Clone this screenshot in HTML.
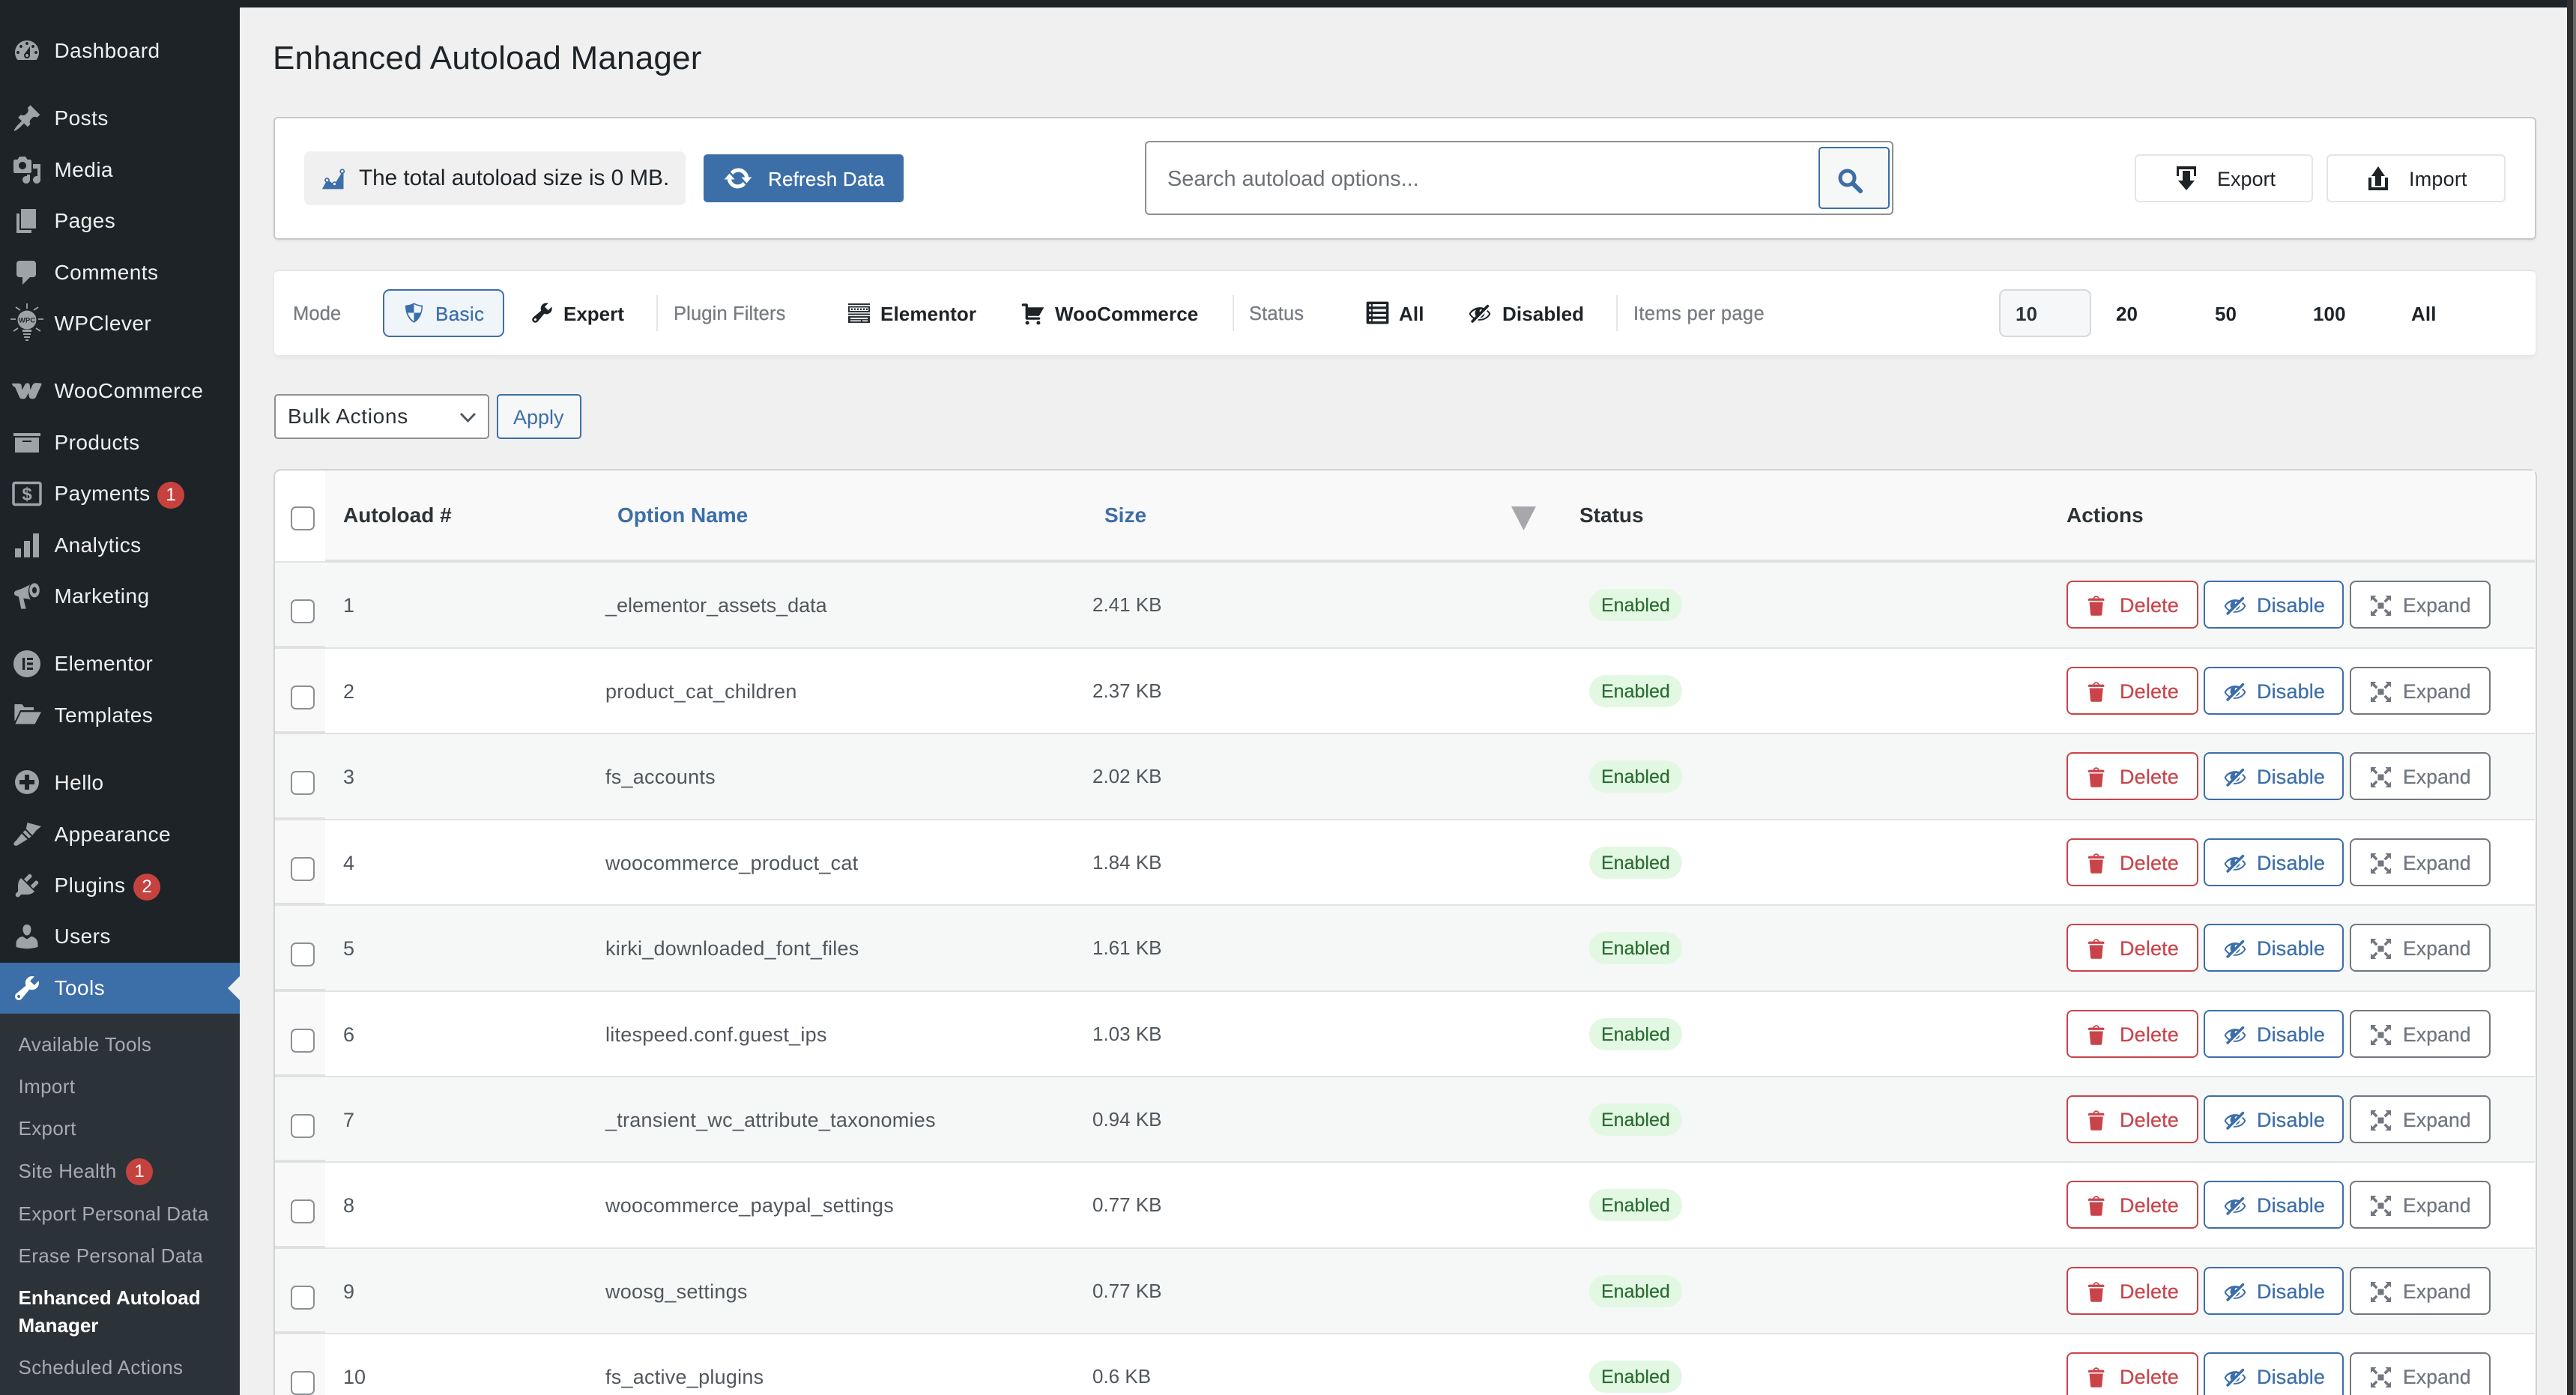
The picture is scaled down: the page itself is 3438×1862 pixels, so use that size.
<!DOCTYPE html>
<html lang="en"><head><meta charset="utf-8"><title>Enhanced Autoload Manager</title>
<style>
html,body{margin:0;padding:0;width:3438px;height:1862px;overflow:hidden;background:#f0f0f0;font-family:"Liberation Sans",sans-serif}
#p{position:relative;width:3438px;height:1862px;overflow:hidden}
.a,.t,svg.i{position:absolute}
.t{white-space:nowrap;line-height:40px;height:40px}
.m{left:72.500px;font-size:28px;letter-spacing:.45px;color:#f0f0f1}
.s{left:24.500px;font-size:26px;letter-spacing:.35px;color:#a7abb0}
svg.i{fill:#9ea3a8}
svg.n{left:16px;width:40px;height:40px}
.bd{background:#c5423f;border-radius:50%;width:36px;height:36px;color:#fff;font-size:24px;line-height:36px;text-align:center}
.f{font-size:26px;font-weight:bold;letter-spacing:.1px;color:#1d2327;top:399px}
.l{font-size:25.500px;letter-spacing:.15px;color:#787c82;top:399px;-webkit-text-stroke:.3px #787c82}
.dv{top:394px;width:2px;height:48px;background:#e6e6e6}
.th{font-size:28px;font-weight:bold;color:#2c3338;top:668px}
.r{position:absolute;left:0;width:0}
.bg{position:absolute;left:367px;width:3016px;box-sizing:border-box;border-bottom:2px solid #e1e3e3}
.cg{position:absolute;left:367px;width:67px;box-sizing:border-box;border-bottom:4px solid #e1e1e1}
.o .bg,.o .cg{background:#f6f7f7}
.e .bg{background:#fff}.e .cg{background:#f9f9f9}
.cb{position:absolute;left:388px;top:49px;width:32px;height:32px;box-sizing:border-box;background:#fff;border:2px solid #8c8f94;border-radius:7px}
.c{font-size:27px;color:#50575e;top:37px}
.r span:nth-of-type(1){margin-left:-1px}
.r span:nth-of-type(2){letter-spacing:.25px}
.r span:nth-of-type(3){font-size:26px;margin-left:-1px;top:36px}
.pl{position:absolute;left:2121px;top:35px;width:124px;height:43px;border-radius:22px;background:#e2f8e3}
.en{left:2137px;top:37px;font-size:25px;color:#2b6a32;-webkit-text-stroke:.2px #2b6a32}
.b{position:absolute;top:24px;height:64px;box-sizing:border-box;border:2px solid;border-radius:8px;background:#fff}
.x{left:2758px;width:176px;border-color:#c9444a}
.y{left:2941px;width:187px;border-color:#3c6ea8}
.z{left:3136px;width:188px;border-color:#72777f}
.bt{font-size:27px;top:37px;letter-spacing:.15px;-webkit-text-stroke:.25px}
.dt{left:2829px;color:#c9444a}.ds{left:3012px;color:#3c6ea8}.xp{left:3207px;color:#6f7680;font-size:26.500px}
.r svg{position:absolute}
.ti{left:2782px;top:41px;width:33px;height:33px;fill:#c9444a}
.hi{left:2967px;top:41px;width:32px;height:32px;fill:#3c6ea8}
.ei{left:3164px;top:44px;width:27px;height:27px;fill:#72777f}
</style></head><body><div id="p">
<svg width="0" height="0" style="position:absolute"><defs>
<symbol id="tr" viewBox="0 0 20 20"><path d="M12 4h3c.6 0 1 .4 1 1v1H3V5c0-.6.5-1 1-1h3c.2-1.100 1.300-2 2.500-2s2.300.9 2.500 2zM8 4h3c-.2-.6-.9-1-1.500-1S8.200 3.400 8 4zM4 7h11l-.9 10.100c0 .5-.5.9-1 .9H5.900c-.5 0-.9-.4-1-.9L4 7z"/></symbol>
<symbol id="hd" viewBox="0 0 20 20"><path d="M17.200 3.300l.16.17c.39.39.39 1.020 0 1.410L4.550 17.700c-.39.39-1.030.39-1.410 0l-.17-.17c-.39-.39-.39-1.020 0-1.410l1.590-1.600c-1.570-1-2.760-2.300-3.560-3.930.81-1.650 2.030-2.980 3.640-3.990S8.040 5.090 10 5.090c1.200 0 2.330.21 3.400.6l2.380-2.390c.39-.39 1.030-.39 1.420 0zm-7.090 4.010c-.23.25-.34.54-.34.88 0 .31.12.58.31.81l1.800-1.790c-.13-.12-.28-.21-.45-.26-.11-.01-.28-.03-.49-.04-.33.03-.6.16-.83.4zM2.400 10.590c.69 1.230 1.710 2.250 3.050 3.050l1.280-1.280c-.51-.69-.77-1.470-.77-2.360 0-1.060.36-1.980 1.090-2.760-1.040.27-1.960.7-2.760 1.260-.8.58-1.430 1.270-1.890 2.090zm13.220-2.130l.96-.96c1.020.86 1.830 1.890 2.420 3.090-.81 1.650-2.030 2.980-3.640 3.990s-3.400 1.510-5.360 1.510c-.63 0-1.240-.07-1.830-.18l1.070-1.070c.25.02.5.05.76.05 1.630 0 3.130-.4 4.500-1.210s2.400-1.840 3.100-3.090c-.46-.82-1.090-1.510-1.890-2.090-.03-.01-.06-.03-.09-.04zm-5.580 5.580l4-4c-.01 1.100-.41 2.040-1.180 2.810-.78.78-1.720 1.180-2.820 1.190z"/></symbol>
<symbol id="ex" viewBox="0 0 27 27"><path d="M9.500 9.500h8v8h-8z"/><path d="M0 0h7.500L5 2.500 9.500 7 7 9.500 2.500 5 0 7.500zM27 0v7.500L24.500 5 20 9.500 17.500 7 22 2.500 19.500 0zM0 27v-7.500L2.500 22 7 17.500 9.500 20 5 24.500 7.500 27zM27 27h-7.500L22 24.500 17.500 20 20 17.500 24.500 22 27 19.500z"/></symbol>
</defs></svg>

<!-- sidebar -->
<div class="a" style="left:0;top:0;width:320px;height:1862px;background:#1d2327"></div>
<div class="a" style="left:320px;top:0;width:3106px;height:10px;background:#1d2327"></div>
<div class="a" style="left:3426px;top:0;width:8px;height:1862px;background:#2d2d2d"></div>
<div class="a" style="left:3434px;top:0;width:4px;height:1862px;background:#6a6a6a"></div>

<svg class="i n" style="top:48px" viewBox="0 0 20 20"><path d="M3.760 16h12.480c1.100-1.370 1.760-3.110 1.760-5 0-4.420-3.580-8-8-8s-8 3.580-8 8c0 1.890.660 3.630 1.760 5zM10 4c.55 0 1 .45 1 1s-.45 1-1 1-1-.45-1-1 .45-1 1-1zM6 6c.55 0 1 .45 1 1s-.45 1-1 1-1-.45-1-1 .45-1 1-1zm8 0c.55 0 1 .45 1 1s-.45 1-1 1-1-.45-1-1 .45-1 1-1zm-5.370 5.550L12 7v6c0 1.100-.9 2-2 2s-2-.9-2-2c0-.57.24-1.080.63-1.450zM4 10c.55 0 1 .45 1 1s-.45 1-1 1-1-.45-1-1 .45-1 1-1zm12 0c.55 0 1 .45 1 1s-.45 1-1 1-1-.45-1-1 .45-1 1-1zm-5 3c0-.55-.45-1-1-1s-1 .45-1 1 .45 1 1 1 1-.45 1-1z"/></svg>
<span class="t m" style="top:48px">Dashboard</span>
<svg class="i n" style="top:138px" viewBox="0 0 20 20"><path d="M10.440 3.020l1.820-1.820 6.360 6.350-1.830 1.820c-1.050-.68-2.480-.57-3.410.36l-.75.75c-.92.930-1.040 2.350-.35 3.410l-1.830 1.820-2.410-2.410-2.800 2.790c-.42.42-3.380 2.710-3.800 2.290s1.860-3.390 2.280-3.810l2.790-2.790L4.100 9.360l1.830-1.820c1.050.69 2.480.57 3.400-.36l.75-.75c.93-.92 1.050-2.350.36-3.410z"/></svg>
<span class="t m" style="top:138px">Posts</span>
<svg class="i n" style="top:207px" viewBox="0 0 20 20"><path d="M13 11V4c0-.55-.45-1-1-1h-1.670L9 1H5L3.670 3H2c-.55 0-1 .45-1 1v7c0 .55.45 1 1 1h10c.55 0 1-.45 1-1zM7 4.500c1.380 0 2.500 1.120 2.500 2.500S8.380 9.500 7 9.500 4.500 8.380 4.500 7 5.620 4.500 7 4.500zM14 6h5v10.500c0 1.380-1.120 2.500-2.500 2.500S14 17.880 14 16.500s1.120-2.500 2.500-2.500c.17 0 .34.02.5.05V9h-3V6zm-4 8.050V13h2v3.500c0 1.380-1.120 2.500-2.500 2.500S7 17.880 7 16.500 8.120 14 9.500 14c.17 0 .34.02.5.05z"/></svg>
<span class="t m" style="top:207px">Media</span>
<svg class="i n" style="top:275px" viewBox="0 0 20 20"><path d="M6 15V2h10v13H6zm-1 1h8v2H3V5h2v11z"/></svg>
<span class="t m" style="top:275px">Pages</span>
<svg class="i n" style="top:344px" viewBox="0 0 20 20"><path d="M5 2h9c1.100 0 2 .9 2 2v7c0 1.100-.9 2-2 2h-2l-5 5v-5H5c-1.100 0-2-.9-2-2V4c0-1.100.9-2 2-2z"/></svg>
<span class="t m" style="top:344px">Comments</span>
<svg class="i" style="left:12px;top:402px;width:48px;height:56px" viewBox="0 0 48 56"><circle cx="24" cy="25" r="12.500"/><text x="24" y="28.500" font-size="9.500" font-weight="bold" text-anchor="middle" fill="#1d2327" font-family="Liberation Sans">WPC</text><path d="M18 38h12v3H18zM19 43h10v2H19zM20 47h8v2H20zM22 51h4v2h-4z"/><path d="M24 3v7M9 8l6 4M39 8l-6 4M2 24h7M39 24h7M6 40l6-4M42 40l-6-4" stroke="#9ea3a8" stroke-width="1.800" fill="none"/></svg>
<span class="t m" style="top:412px">WPClever</span>
<svg class="i" style="left:16px;top:511px;width:40px;height:22px;overflow:visible" viewBox="0 0 40 22"><path stroke="#9ea3a8" stroke-width="1.500" stroke-linejoin="round" d="M.8 1.500h8.200c2 0 3 1 3 3l1 7.500 5-9.500c1-2 5-2 5 1l1 8.500 4-8.500c1-3 4-3 11-2l-7.500 16.500c-1 3.500-7 3.500-8 .5l-1-7.500-4 7.500c-1 3-7 3-8 0L5 6C4 4 1.500 5 .8 1.500z"/></svg>
<span class="t m" style="top:502px">WooCommerce</span>
<svg class="i n" style="top:570px" viewBox="0 0 20 20"><path d="M19 4v2H1V4h18zM2 7h16v10H2V7zm11 3V9H7v1h6z"/></svg>
<span class="t m" style="top:571px">Products</span>
<svg class="i n" style="top:639px" viewBox="0 0 40 40"><rect x="2" y="5.500" width="36" height="29" rx="2" fill="none" stroke="#9ea3a8" stroke-width="3.500"/><text x="20" y="28.500" font-size="24" font-weight="bold" text-anchor="middle" font-family="Liberation Sans">$</text></svg>
<span class="t m" style="top:639px">Payments</span>
<div class="a bd" style="left:210px;top:643px">1</div>
<svg class="i n" style="top:708px" viewBox="0 0 20 20"><path d="M18 18V2h-4v16h4zm-6 0V7H8v11h4zm-6 0v-6H2v6h4z"/></svg>
<span class="t m" style="top:708px">Analytics</span>
<svg class="i n" style="top:776px" viewBox="0 0 20 20"><path fill-rule="evenodd" d="M15 1.200c2 0 3.400 2.100 3.400 4.700s-1.400 4.800-3.400 4.800c-2 0-3.400-2.200-3.400-4.800s1.400-4.700 3.400-4.700zm0 2.600c-.9 0-1.500.9-1.500 2.100S14.100 8 15 8s1.500-.9 1.500-2.100S15.900 3.800 15 3.800z"/><path d="M12 2.100C9 4 5 5.400 2.500 6.300 1.300 6.800 1 8.600 2.300 9.400L4.500 10.300l1.600 8h3.200l-1.700-7c1.700.1 3.400.3 4.800.9C10.600 9 10.500 5 12 2.100z"/></svg>
<span class="t m" style="top:776px">Marketing</span>
<svg class="i n" style="top:866px" viewBox="0 0 20 20"><path fill-rule="evenodd" d="M10 1a9 9 0 100 18 9 9 0 000-18zM7 6h1.600v8H7zm3 0h4v1.500h-4zm0 3.200h4v1.600h-4zm0 3.300h4V14h-4z"/></svg>
<span class="t m" style="top:866px">Elementor</span>
<svg class="i n" style="top:934px" viewBox="0 0 20 20"><path d="M1.700 3h5l1.500 2h6.300v2H5.500L2.400 13.500 1.700 14zM2.200 16.200 6 8.200h13.500l-4.200 8z"/></svg>
<span class="t m" style="top:935px">Templates</span>
<svg class="i n" style="top:1024px" viewBox="0 0 20 20"><path fill-rule="evenodd" d="M10 2a8 8 0 100 16 8 8 0 000-16zM8.500 5h3v3.500H15v3h-3.500V15h-3v-3.500H5v-3h3.500z"/></svg>
<span class="t m" style="top:1025px">Hello</span>
<svg class="i n" style="top:1093px" viewBox="0 0 20 20"><path d="M10.200 2.500 19.500 5l-3.400 2.800-2.500 3.200-4.200-4.300zM8.800 7.500 12.800 11.700 11.300 13 7.300 9zM6.500 9.800 10.300 13.600 4.200 17.400C3 18.300 1.300 18 1.200 16.800c-.1-1 .8-1.600 1.400-2.200z"/></svg>
<span class="t m" style="top:1094px">Appearance</span>
<svg class="i n" style="top:1162px" viewBox="0 0 20 20"><path d="M13.110 4.360L9.870 7.600 8 5.730l3.240-3.240c.35-.34 1.050-.2 1.560.32.52.51.66 1.210.31 1.550zm-8 1.770l.91-1.120 9.010 9.010-1.190.84c-.71.71-2.630 1.160-3.820 1.160H6.140L4.900 17.260c-.59.59-1.540.59-2.120 0-.59-.58-.59-1.530 0-2.120l1.240-1.240v-3.880c0-1.130.4-3.190 1.090-3.890zm7.260 3.970l3.240-3.240c.34-.35 1.040-.21 1.550.31.52.51.66 1.210.31 1.550l-3.240 3.250z"/></svg>
<span class="t m" style="top:1162px">Plugins</span>
<div class="a bd" style="left:178px;top:1166px">2</div>
<svg class="i n" style="top:1230px" viewBox="0 0 20 20"><path d="M10 9.250c-2.270 0-2.730-3.440-2.730-3.440C7 4.020 7.820 2 9.970 2c2.160 0 2.980 2.020 2.710 3.810 0 0-.41 3.440-2.680 3.440zm0 2.570L12.720 10c2.390 0 4.520 2.330 4.520 4.530v2.490s-3.650 1.130-7.240 1.130c-3.650 0-7.240-1.130-7.240-1.130v-2.490c0-2.250 1.940-4.480 4.470-4.480z"/></svg>
<span class="t m" style="top:1230px">Users</span>

<div class="a" style="left:0;top:1285px;width:320px;height:68px;background:#3c6ea8"></div>
<svg class="i n" style="top:1299px;fill:#fff" viewBox="0 0 20 20"><path d="M16.680 9.770c-1.340 1.340-3.300 1.670-4.950.99l-5.410 6.520c-.99.99-2.590.99-3.580 0s-.99-2.590 0-3.570l6.520-5.420c-.68-1.650-.35-3.610.99-4.950 1.280-1.280 3.120-1.620 4.720-1.060l-2.890 2.890 2.820 2.820 2.860-2.870c.53 1.580.18 3.390-1.080 4.650zM3.810 16.210c.4.39 1.040.39 1.430 0 .4-.4.4-1.040 0-1.430-.39-.4-1.030-.4-1.430 0-.39.39-.39 1.030 0 1.430z"/></svg>
<span class="t m" style="top:1299px;color:#fff">Tools</span>
<svg class="i" style="left:304px;top:1303px;width:16px;height:32px;fill:#f0f0f0" viewBox="0 0 16 32"><path d="M16 0v32L0 16z"/></svg>
<div class="a" style="left:0;top:1353px;width:320px;height:509px;background:#2c3338"></div>
<span class="t s" style="top:1374px">Available Tools</span>
<span class="t s" style="top:1430px">Import</span>
<span class="t s" style="top:1486px">Export</span>
<span class="t s" style="top:1543px">Site Health</span>
<div class="a bd" style="left:168px;top:1546px">1</div>
<span class="t s" style="top:1600px">Export Personal Data</span>
<span class="t s" style="top:1656px">Erase Personal Data</span>
<span class="t s" style="top:1712px;color:#fff;font-weight:bold;letter-spacing:0">Enhanced Autoload</span>
<span class="t s" style="top:1749px;color:#fff;font-weight:bold;letter-spacing:0">Manager</span>
<span class="t s" style="top:1805px">Scheduled Actions</span>

<!-- title -->
<span class="t" style="left:364px;top:58px;font-size:44px;letter-spacing:.2px;color:#1d2327">Enhanced Autoload Manager</span>

<!-- card 1 -->
<div class="a" style="left:365px;top:156px;width:3020px;height:164px;box-sizing:border-box;background:#fff;border:2px solid #c8c9cd;border-radius:6px;box-shadow:0 2px 3px rgba(0,0,0,.06)"></div>
<div class="a" style="left:406px;top:202px;width:509px;height:72px;background:#f0f0f1;border-radius:8px"></div>
<svg class="i" style="left:428px;top:222px;width:34px;height:32px;fill:#3c6ea8" viewBox="0 0 20 19"><path d="M18 18l.01-12.280c.59-.35.99-.99.99-1.720 0-1.100-.9-2-2-2s-2 .9-2 2c0 .8.47 1.480 1.140 1.800l-4.130 6.580c-.33-.24-.73-.38-1.160-.38-.84 0-1.550.51-1.850 1.240l-2.140-1.530c.09-.22.14-.46.14-.71 0-1.100-.9-2-2-2s-2 .9-2 2c0 .73.4 1.360.98 1.710L1 18h17zM17 3c.55 0 1 .45 1 1s-.45 1-1 1-1-.45-1-1 .45-1 1-1zM5 10c.55 0 1 .45 1 1s-.45 1-1 1-1-.45-1-1 .45-1 1-1zm5.850 3c.55 0 1 .45 1 1s-.45 1-1 1-1-.45-1-1 .45-1 1-1z"/></svg>
<span class="t" style="left:479px;top:218px;font-size:29.700px;color:#1d2327">The total autoload size is 0 MB.</span>
<div class="a" style="left:939px;top:206px;width:267px;height:64px;background:#3c6ea8;border-radius:5px"></div>
<svg class="i" style="left:965px;top:218px;width:40px;height:40px;fill:#fff" viewBox="0 0 20 20"><path d="M10.200 3.280c3.530 0 6.430 2.610 6.920 6h2.080l-3.500 4-3.500-4h2.320c-.45-1.970-2.210-3.450-4.320-3.450-1.450 0-2.730.71-3.540 1.780L4.950 5.660C6.230 4.200 8.110 3.280 10.200 3.280zm-.4 13.440c-3.520 0-6.430-2.610-6.920-6H.8l3.500-4c1.170 1.330 2.330 2.670 3.500 4H5.480c.45 1.970 2.210 3.450 4.320 3.450 1.450 0 2.730-.71 3.540-1.780l1.710 1.950c-1.280 1.460-3.150 2.380-5.250 2.380z"/></svg>
<span class="t" style="left:1025px;top:219px;font-size:26px;letter-spacing:.2px;color:#fff;-webkit-text-stroke:.2px #fff">Refresh Data</span>

<div class="a" style="left:1528px;top:188px;width:999px;height:99px;box-sizing:border-box;background:#fff;border:2px solid #8c8f94;border-radius:6px"></div>
<span class="t" style="left:1558px;top:219px;font-size:28.900px;color:#6c7177">Search autoload options...</span>
<div class="a" style="left:2427px;top:196px;width:95px;height:83px;box-sizing:border-box;background:#f6f7f7;border:2px solid #3c6ea8;border-radius:5px"></div>
<svg class="i" style="left:2453px;top:225px;width:33px;height:33px" viewBox="0 0 33 33"><circle cx="12.500" cy="12.500" r="9.500" fill="none" stroke="#3c6ea8" stroke-width="5"/><path d="M20 20l10 10" stroke="#3c6ea8" stroke-width="6" stroke-linecap="round"/></svg>

<div class="a" style="left:2849px;top:206px;width:238px;height:64px;box-sizing:border-box;background:#fff;border:2px solid #e4e5e9;border-radius:6px"></div>
<svg class="i" style="left:2905px;top:222px;width:26px;height:32px;fill:#1d2327" viewBox="0 0 26 32"><path d="M0 0h26v13h-3V4H3v9H0z"/><path d="M8 6h10v13h6L13 32 2 19h6z"/></svg>
<span class="t" style="left:2959px;top:219px;font-size:27px;color:#1d2327">Export</span>
<div class="a" style="left:3105px;top:206px;width:239px;height:64px;box-sizing:border-box;background:#fff;border:2px solid #e4e5e9;border-radius:6px"></div>
<svg class="i" style="left:3161px;top:222px;width:26px;height:32px;fill:#1d2327" viewBox="0 0 26 32"><path d="M0 15h4v13h18V15h4v17H0z"/><path d="M13 0l9 13h-5v13H9V13H4z"/></svg>
<span class="t" style="left:3215px;top:219px;font-size:27px;letter-spacing:.2px;color:#1d2327">Import</span>

<!-- card 2 -->
<div class="a" style="left:366px;top:360px;width:3018px;height:114px;box-sizing:border-box;background:#fff;border-top:2px solid #e4e4ea;border-radius:6px;box-shadow:0 3px 6px rgba(0,0,0,.05)"></div>
<span class="t l" style="left:391px">Mode</span>
<div class="a" style="left:511px;top:386px;width:162px;height:64px;box-sizing:border-box;background:#f0f5fa;border:2px solid #3c6ea8;border-radius:9px"></div>
<svg class="i" style="left:536px;top:401px;width:33px;height:33px;fill:#3c6ea8" viewBox="0 0 20 20"><path d="M10 2s3 2 7 2c0 11-7 14-7 14S3 15 3 4c4 0 7-2 7-2zm0 8h5s1-1 1-5c0 0-5-1-6-2v7H5c1 4 5 7 5 7v-7z"/></svg>
<span class="t" style="left:581px;top:399px;font-size:26px;letter-spacing:.35px;color:#3c6ea8;-webkit-text-stroke:.3px #3c6ea8">Basic</span>
<svg class="i" style="left:707px;top:401px;width:33px;height:33px;fill:#1d2327" viewBox="0 0 20 20"><path d="M16.680 9.770c-1.340 1.340-3.300 1.670-4.950.99l-5.410 6.520c-.99.99-2.590.99-3.580 0s-.99-2.590 0-3.570l6.520-5.420c-.68-1.650-.35-3.610.99-4.950 1.280-1.280 3.120-1.620 4.720-1.060l-2.890 2.890 2.820 2.820 2.860-2.870c.53 1.580.18 3.390-1.080 4.650zM3.810 16.210c.4.39 1.040.39 1.430 0 .4-.4.4-1.040 0-1.430-.39-.4-1.030-.4-1.430 0-.39.39-.39 1.030 0 1.430z"/></svg>
<span class="t f" style="left:752px;letter-spacing:0">Expert</span>
<div class="a dv" style="left:876px"></div>
<span class="t l" style="left:899px">Plugin Filters</span>
<svg class="i" style="left:1132px;top:405px;width:29px;height:26px;fill:#2c3338" viewBox="0 0 29 26"><path fill-rule="evenodd" d="M0 0h29v2H0zM0 3.500h29v8.500H0zM2 5.500v4.500h25V5.500zM0 13.500h29v2H0zM0 17h29v9H0zM3 19v2h23v-2zM3 22.500v1.500h14v-1.500zM19 22.500v1.500h7v-1.500z"/><path d="M4 6.500h2v2.500H4zM8 6.500h2v2.500H8zM12 6.500h2v2.500h-2zM16 6.500h2v2.500h-2zM20 6.500h2v2.500h-2zM24 6.500h2v2.500h-2z"/></svg>
<span class="t f" style="left:1175px">Elementor</span>
<svg class="i" style="left:1362px;top:402px;width:33px;height:33px;fill:#1d2327" viewBox="0 0 20 20"><path d="M6 13h9c.55 0 1 .45 1 1s-.45 1-1 1H5c-.55 0-1-.45-1-1V4H2c-.55 0-1-.45-1-1s.45-1 1-1h3c.55 0 1 .45 1 1v2h13l-4 7H6v1zm-.5 3c.83 0 1.500.67 1.500 1.500S6.330 19 5.500 19 4 18.330 4 17.500 4.670 16 5.500 16zm9 0c.83 0 1.500.67 1.500 1.500s-.67 1.500-1.500 1.500-1.500-.67-1.500-1.500.67-1.500 1.500-1.500z"/></svg>
<span class="t f" style="left:1408px">WooCommerce</span>
<div class="a dv" style="left:1645px"></div>
<span class="t l" style="left:1667px">Status</span>
<svg class="i" style="left:1822px;top:401px;width:33px;height:33px;fill:#1d2327" viewBox="0 0 20 20"><path d="M2 19h16c.55 0 1-.45 1-1V2c0-.55-.45-1-1-1H2c-.55 0-1 .45-1 1v16c0 .55.45 1 1 1zM4 3c.55 0 1 .45 1 1s-.45 1-1 1-1-.45-1-1 .45-1 1-1zm13 0v2H6V3h11zM4 7c.55 0 1 .45 1 1s-.45 1-1 1-1-.45-1-1 .45-1 1-1zm13 0v2H6V7h11zM4 11c.55 0 1 .45 1 1s-.45 1-1 1-1-.45-1-1 .45-1 1-1zm13 0v2H6v-2h11zM4 15c.55 0 1 .45 1 1s-.45 1-1 1-1-.45-1-1 .45-1 1-1zm13 0v2H6v-2h11z"/></svg>
<span class="t f" style="left:1867px">All</span>
<svg class="i" style="left:1959px;top:402px;width:32px;height:32px;fill:#1d2327" viewBox="0 0 20 20"><use href="#hd"/></svg>
<span class="t f" style="left:2005px">Disabled</span>
<div class="a dv" style="left:2157px"></div>
<span class="t l" style="left:2180px;letter-spacing:.35px">Items per page</span>
<div class="a" style="left:2668px;top:386px;width:123px;height:64px;box-sizing:border-box;background:#f6f7f9;border:2px solid #d6d9de;border-radius:9px"></div>
<span class="t f" style="left:2690px;color:#2c3338">10</span>
<span class="t f" style="left:2824px">20</span>
<span class="t f" style="left:2956px">50</span>
<span class="t f" style="left:3087px">100</span>
<span class="t f" style="left:3218px">All</span>

<!-- bulk -->
<div class="a" style="left:366px;top:526px;width:287px;height:60px;box-sizing:border-box;background:#fff;border:2px solid #8c8f94;border-radius:5px"></div>
<span class="t" style="left:384px;top:536px;font-size:28px;letter-spacing:.7px;color:#2c3338">Bulk Actions</span>
<svg class="i" style="left:613px;top:550px;width:23px;height:14px" viewBox="0 0 23 14"><path d="M2 2l9.500 10L21 2" fill="none" stroke="#50575e" stroke-width="2.800"/></svg>
<div class="a" style="left:663px;top:526px;width:113px;height:60px;box-sizing:border-box;background:#f6f7f7;border:2px solid #3c6ea8;border-radius:5px"></div>
<span class="t" style="left:685px;top:537px;font-size:27px;color:#3c6ea8">Apply</span>

<!-- table -->
<div class="a" style="left:365px;top:626px;width:3021px;height:1300px;box-sizing:border-box;background:#fff;border:2px solid #d0d2d5;border-radius:10px"></div>
<div class="a" style="left:434px;top:628px;width:2949px;height:119px;background:#f9f9f9"></div>
<div class="a" style="left:434px;top:747px;width:2949px;height:4px;background:#e0e0e0"></div>
<div class="a" style="left:367px;top:749px;width:67px;height:2px;background:#e4e4e4"></div>
<b class="a" style="left:388px;top:676px;width:32px;height:32px;box-sizing:border-box;background:#fff;border:2px solid #8c8f94;border-radius:7px"></b>
<span class="t th" style="left:458px">Autoload #</span>
<span class="t th" style="left:824px;color:#3c6ea8">Option Name</span>
<span class="t th" style="left:1474px;color:#3c6ea8">Size</span>
<svg class="i" style="left:2017px;top:676px;width:33px;height:32px;fill:#a8a8ac" viewBox="0 0 33 32"><path d="M0 0h33L16.500 32z"/></svg>
<span class="t th" style="left:2108px">Status</span>
<span class="t th" style="left:2758px">Actions</span>

<div class="r o" style="top:751px"><div class="bg" style="height:115px"></div><div class="cg" style="height:115px"></div><b class="cb"></b><span class="t c" style="left:459px">1</span><span class="t c" style="left:808px;letter-spacing:0">_elementor_assets_data</span><span class="t c" style="left:1459px">2.41 KB</span><i class="pl"></i><span class="t en">Enabled</span><div class="b x"></div><svg class="ti"><use href="#tr"/></svg><span class="t bt dt">Delete</span><div class="b y"></div><svg class="hi"><use href="#hd"/></svg><span class="t bt ds">Disable</span><div class="b z"></div><svg class="ei"><use href="#ex"/></svg><span class="t bt xp">Expand</span></div>
<div class="r e" style="top:866px"><div class="bg" style="height:114px"></div><div class="cg" style="height:114px"></div><b class="cb"></b><span class="t c" style="left:459px">2</span><span class="t c" style="left:808px">product_cat_children</span><span class="t c" style="left:1459px">2.37 KB</span><i class="pl"></i><span class="t en">Enabled</span><div class="b x"></div><svg class="ti"><use href="#tr"/></svg><span class="t bt dt">Delete</span><div class="b y"></div><svg class="hi"><use href="#hd"/></svg><span class="t bt ds">Disable</span><div class="b z"></div><svg class="ei"><use href="#ex"/></svg><span class="t bt xp">Expand</span></div>
<div class="r o" style="top:980px"><div class="bg" style="height:115px"></div><div class="cg" style="height:115px"></div><b class="cb"></b><span class="t c" style="left:459px">3</span><span class="t c" style="left:808px">fs_accounts</span><span class="t c" style="left:1459px">2.02 KB</span><i class="pl"></i><span class="t en">Enabled</span><div class="b x"></div><svg class="ti"><use href="#tr"/></svg><span class="t bt dt">Delete</span><div class="b y"></div><svg class="hi"><use href="#hd"/></svg><span class="t bt ds">Disable</span><div class="b z"></div><svg class="ei"><use href="#ex"/></svg><span class="t bt xp">Expand</span></div>
<div class="r e" style="top:1095px"><div class="bg" style="height:114px"></div><div class="cg" style="height:114px"></div><b class="cb"></b><span class="t c" style="left:459px">4</span><span class="t c" style="left:808px">woocommerce_product_cat</span><span class="t c" style="left:1459px">1.84 KB</span><i class="pl"></i><span class="t en">Enabled</span><div class="b x"></div><svg class="ti"><use href="#tr"/></svg><span class="t bt dt">Delete</span><div class="b y"></div><svg class="hi"><use href="#hd"/></svg><span class="t bt ds">Disable</span><div class="b z"></div><svg class="ei"><use href="#ex"/></svg><span class="t bt xp">Expand</span></div>
<div class="r o" style="top:1209px"><div class="bg" style="height:115px"></div><div class="cg" style="height:115px"></div><b class="cb"></b><span class="t c" style="left:459px">5</span><span class="t c" style="left:808px">kirki_downloaded_font_files</span><span class="t c" style="left:1459px">1.61 KB</span><i class="pl"></i><span class="t en">Enabled</span><div class="b x"></div><svg class="ti"><use href="#tr"/></svg><span class="t bt dt">Delete</span><div class="b y"></div><svg class="hi"><use href="#hd"/></svg><span class="t bt ds">Disable</span><div class="b z"></div><svg class="ei"><use href="#ex"/></svg><span class="t bt xp">Expand</span></div>
<div class="r e" style="top:1324px"><div class="bg" style="height:114px"></div><div class="cg" style="height:114px"></div><b class="cb"></b><span class="t c" style="left:459px">6</span><span class="t c" style="left:808px">litespeed.conf.guest_ips</span><span class="t c" style="left:1459px">1.03 KB</span><i class="pl"></i><span class="t en">Enabled</span><div class="b x"></div><svg class="ti"><use href="#tr"/></svg><span class="t bt dt">Delete</span><div class="b y"></div><svg class="hi"><use href="#hd"/></svg><span class="t bt ds">Disable</span><div class="b z"></div><svg class="ei"><use href="#ex"/></svg><span class="t bt xp">Expand</span></div>
<div class="r o" style="top:1438px"><div class="bg" style="height:114px"></div><div class="cg" style="height:114px"></div><b class="cb"></b><span class="t c" style="left:459px">7</span><span class="t c" style="left:808px">_transient_wc_attribute_taxonomies</span><span class="t c" style="left:1459px">0.94 KB</span><i class="pl"></i><span class="t en">Enabled</span><div class="b x"></div><svg class="ti"><use href="#tr"/></svg><span class="t bt dt">Delete</span><div class="b y"></div><svg class="hi"><use href="#hd"/></svg><span class="t bt ds">Disable</span><div class="b z"></div><svg class="ei"><use href="#ex"/></svg><span class="t bt xp">Expand</span></div>
<div class="r e" style="top:1552px"><div class="bg" style="height:115px"></div><div class="cg" style="height:115px"></div><b class="cb"></b><span class="t c" style="left:459px">8</span><span class="t c" style="left:808px">woocommerce_paypal_settings</span><span class="t c" style="left:1459px">0.77 KB</span><i class="pl"></i><span class="t en">Enabled</span><div class="b x"></div><svg class="ti"><use href="#tr"/></svg><span class="t bt dt">Delete</span><div class="b y"></div><svg class="hi"><use href="#hd"/></svg><span class="t bt ds">Disable</span><div class="b z"></div><svg class="ei"><use href="#ex"/></svg><span class="t bt xp">Expand</span></div>
<div class="r o" style="top:1667px"><div class="bg" style="height:114px"></div><div class="cg" style="height:114px"></div><b class="cb"></b><span class="t c" style="left:459px">9</span><span class="t c" style="left:808px">woosg_settings</span><span class="t c" style="left:1459px">0.77 KB</span><i class="pl"></i><span class="t en">Enabled</span><div class="b x"></div><svg class="ti"><use href="#tr"/></svg><span class="t bt dt">Delete</span><div class="b y"></div><svg class="hi"><use href="#hd"/></svg><span class="t bt ds">Disable</span><div class="b z"></div><svg class="ei"><use href="#ex"/></svg><span class="t bt xp">Expand</span></div>
<div class="r e" style="top:1781px"><div class="bg" style="height:115px"></div><div class="cg" style="height:115px"></div><b class="cb"></b><span class="t c" style="left:459px">10</span><span class="t c" style="left:808px">fs_active_plugins</span><span class="t c" style="left:1459px">0.6 KB</span><i class="pl"></i><span class="t en">Enabled</span><div class="b x"></div><svg class="ti"><use href="#tr"/></svg><span class="t bt dt">Delete</span><div class="b y"></div><svg class="hi"><use href="#hd"/></svg><span class="t bt ds">Disable</span><div class="b z"></div><svg class="ei"><use href="#ex"/></svg><span class="t bt xp">Expand</span></div>
</div></body></html>
